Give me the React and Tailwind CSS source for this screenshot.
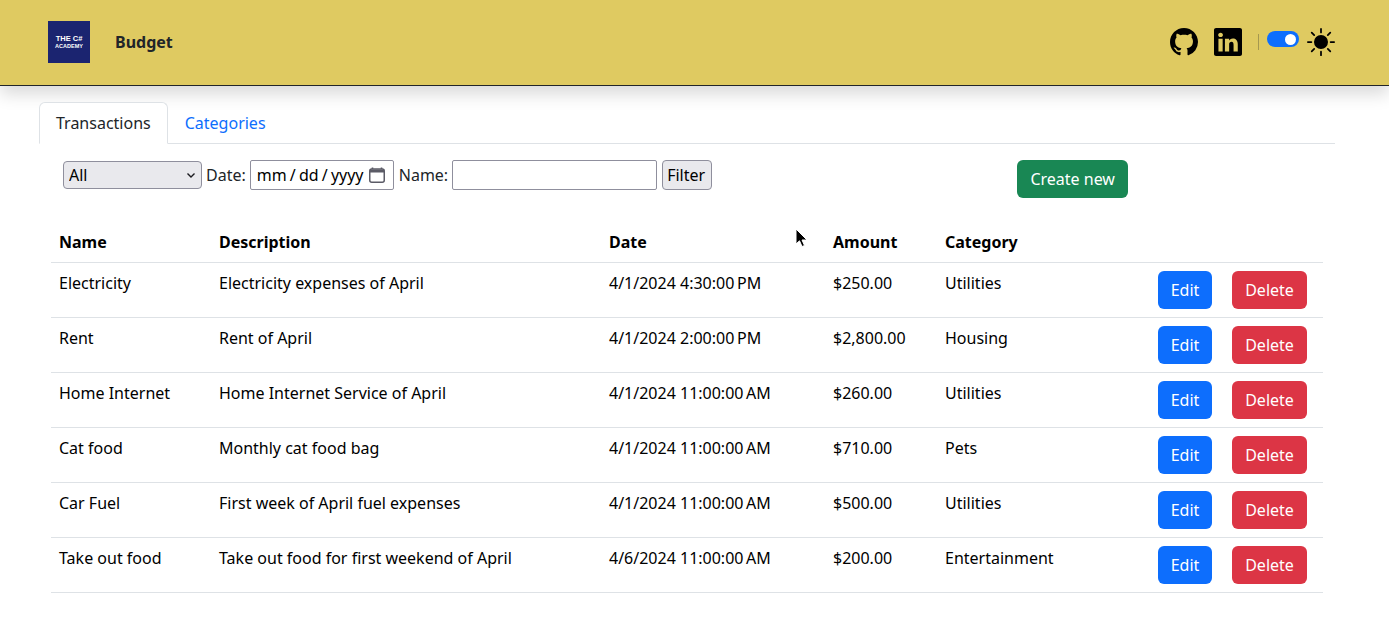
import React from 'react';
import { BsGithub, BsLinkedin, BsSunFill } from 'react-icons/bs';

const rows = [
  ['Electricity', 'Electricity expenses of April', '4/1/2024 4:30:00\u202fPM', '$250.00', 'Utilities'],
  ['Rent', 'Rent of April', '4/1/2024 2:00:00\u202fPM', '$2,800.00', 'Housing'],
  ['Home Internet', 'Home Internet Service of April', '4/1/2024 11:00:00\u202fAM', '$260.00', 'Utilities'],
  ['Cat food', 'Monthly cat food bag', '4/1/2024 11:00:00\u202fAM', '$710.00', 'Pets'],
  ['Car Fuel', 'First week of April fuel expenses', '4/1/2024 11:00:00\u202fAM', '$500.00', 'Utilities'],
  ['Take out food', 'Take out food for first weekend of April', '4/6/2024 11:00:00\u202fAM', '$200.00', 'Entertainment'],
];

const Header = () => (
  <header className="h-[86px] bg-[#dfca61] border-b border-[#212529] shadow-[0_8px_16px_rgba(0,0,0,0.15)] pl-[48px] pr-[54px] pb-[1px] flex items-center">
    <div className="w-[42px] h-[42px] pb-[1px] bg-[#1b2470] flex flex-col items-center justify-center text-white font-bold font-['Liberation_Sans',sans-serif]">
      <span className="text-[7.5px] leading-[9px]">THE C#</span>
      <span className="text-[5.5px] leading-[6px]">ACADEMY</span>
    </div>
    <span className="ml-[25px] font-bold text-[#212529]">Budget</span>
    <div className="ml-auto flex items-center text-black">
      <BsGithub size={28} />
      <BsLinkedin size={28} className="ml-[16px]" />
      <div className="ml-[16px] w-px h-[16px] bg-[#212529]/30" />
      <div className="ml-[8px] mb-[6px] w-[32px] h-[16px] rounded-full bg-[#0d6efd] flex items-center justify-end pr-[3px]">
        <div className="w-[11px] h-[11px] rounded-full bg-white" />
      </div>
      <BsSunFill size={28} className="ml-[8px]" />
    </div>
  </header>
);

const Tabs = () => (
  <div className="ml-[39px] mr-[54px] mt-[16px] flex border-b border-[#dee2e6] h-[42px]">
    <div className="h-[42px] px-[16px] flex items-center border border-[#dee2e6] border-b-white rounded-t-[6px] bg-white text-[#212529]">Transactions</div>
    <div className="h-[42px] px-[17px] flex items-center text-[#0d6efd]">Categories</div>
  </div>
);

const FilterBar = () => (
  <div className="ml-[63px] mt-[16px] h-[38px] flex items-start text-[#212529]">
    <div className="flex items-center h-[30px]">
      <div className="relative w-[139px] h-[28px]">
        <select className="appearance-none w-full h-full pl-[5px] bg-[#e9e9ed] border border-[#8f8f9d] rounded-[4px] text-black">
          <option>All</option>
        </select>
        <svg className="absolute right-[7px] top-[12px] pointer-events-none" width="8" height="5" viewBox="0 0 8 5">
          <path d="M0.5 0.5 L4 4 L7.5 0.5" fill="none" stroke="#1b1b1f" strokeWidth="1.4" />
        </svg>
      </div>
      <label className="ml-[4px]">Date:</label>
      <div className="ml-[4px] w-[144px] h-[30px] pl-[6px] flex items-center bg-white border border-[#8f8f9d] rounded-[2px] text-black">
        <span className="[word-spacing:-1px] whitespace-pre">mm / dd / yyyy</span>
        <svg className="ml-[5px]" width="16" height="16" viewBox="0 0 16 16">
          <path d="M3.5 0.5 V2 M12.5 0.5 V2" stroke="#5b5b66" strokeWidth="1.6" />
          <rect x="0.75" y="2" width="14.5" height="13.25" rx="2" fill="none" stroke="#5b5b66" strokeWidth="1.5" />
          <rect x="1" y="2.5" width="14" height="3" fill="#5b5b66" />
        </svg>
      </div>
      <label className="ml-[5px]">Name:</label>
      <input type="text" className="ml-[4px] w-[205px] h-[30px] px-[2px] bg-white border border-[#8f8f9d] rounded-[2px]" />
      <button className="ml-[5px] w-[50px] h-[30px] pr-[2px] bg-[#e9e9ed] border border-[#8f8f9d] rounded-[4px] text-black">Filter</button>
    </div>
    <button className="ml-[305px] w-[111px] h-[38px] bg-[#198754] rounded-[6px] text-white">Create new</button>
  </div>
);

const TransactionsTable = () => (
  <table className="ml-[51px] mt-[24px] w-[1272px] table-fixed border-collapse text-[#212529]">
    <colgroup>
      <col className="w-[160px]" />
      <col className="w-[390px]" />
      <col className="w-[224px]" />
      <col className="w-[112px]" />
      <col className="w-[213px]" />
      <col className="w-[74px]" />
      <col />
    </colgroup>
    <thead>
      <tr className="h-[40px] border-b border-[#dee2e6]">
        {['Name', 'Description', 'Date', 'Amount', 'Category'].map((h) => (
          <th key={h} className="px-[8px] text-left font-bold text-black">{h}</th>
        ))}
        <th />
        <th />
      </tr>
    </thead>
    <tbody>
      {rows.map((r) => (
        <tr key={r[0]} className="h-[55px] border-b border-[#dee2e6]">
          {r.map((c, i) => (
            <td key={i} className="px-[8px] pt-[8px] align-top text-black leading-[24px]">{c}</td>
          ))}
          <td className="px-[8px] align-middle">
            <button className="w-[54px] h-[38px] bg-[#0d6efd] rounded-[6px] text-white">Edit</button>
          </td>
          <td className="px-[8px] align-middle">
            <button className="w-[75px] h-[38px] bg-[#dc3545] rounded-[6px] text-white">Delete</button>
          </td>
        </tr>
      ))}
    </tbody>
  </table>
);

export default function App() {
  return (
    <div className="relative min-h-[636px] bg-white text-[16px] font-['Noto_Sans',sans-serif] overflow-hidden">
      <Header />
      <Tabs />
      <FilterBar />
      <TransactionsTable />
      {/* mouse pointer caught in the capture */}
      <svg className="absolute left-[795px] top-[228px]" width="14" height="22" viewBox="0 0 14 22">
        <path d="M1 1 L1 16 L4.5 12.8 L7 18.5 L9.5 17.5 L7 12 L12 12 Z" fill="#000" stroke="#fff" strokeWidth="1" />
      </svg>
    </div>
  );
}
